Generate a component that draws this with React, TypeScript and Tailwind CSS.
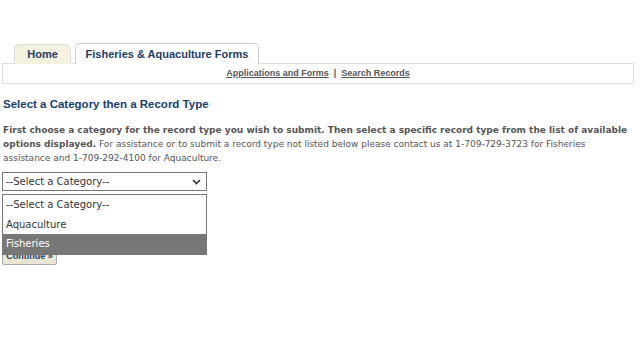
import { useState } from "react";

const options = ["--Select a Category--", "Aquaculture", "Fisheries"];

export default function App() {
    const [selected] = useState("Fisheries");

    return (
        <div className="relative min-h-[337px] w-[640px] bg-white pt-[43px] font-['DejaVu_Sans',Verdana,sans-serif] text-[#555]">
            {/* tabs */}
            <div className="flex items-end gap-[4px] pl-[14px] font-['Liberation_Sans',Arial,sans-serif] text-[11px] font-bold text-[#1d3d66]">
                <div className="-mb-px flex h-[20px] w-[57px] items-center justify-center rounded-t-[5px] border border-b-0 border-[#ddd] bg-[#f4f1de]">Home</div>
                <div className="relative z-10 -mb-px flex h-[21px] w-[184px] items-center justify-center rounded-t-[5px] border border-b-0 border-[#ccc] bg-white">Fisheries &amp; Aquaculture Forms</div>
            </div>
            <div className="mx-[2px] flex h-[21px] w-[632px] items-center justify-center border border-[#ddd] font-['Liberation_Sans',Arial,sans-serif] text-[9px] font-bold text-[#555]">
                <a className="underline">Applications and Forms</a>
                <span className="mx-[5px]">|</span>
                <a className="underline">Search Records</a>
            </div>

            <div className="pl-[3px] pt-[12px]">
                <h2 className="font-['Liberation_Sans',Arial,sans-serif] text-[11.5px] font-bold leading-[16px] text-[#18406e]">Select a Category then a Record Type</h2>
                <p className="mt-[11px] w-[628px] text-[9px] leading-[14px]">
                    <b>First choose a category for the record type you wish to submit. Then select a specific record type from the list of available options displayed.</b> For assistance or to submit a record type not listed below please contact us at 1-709-729-3723 for Fisheries assistance and 1-709-292-4100 for Aquaculture.
                </p>
            </div>

            <div className="ml-[2px] mt-[7px] flex h-[19px] w-[205px] items-center justify-between border border-[#767676] pl-[3px] pr-[5px] text-[10px] text-[#333]">
                <span>--Select a Category--</span>
                <svg width="9" height="6" viewBox="0 0 9 6"><path d="M1 1l3.5 3.5L8 1" fill="none" stroke="#333" strokeWidth="1.6" /></svg>
            </div>

            <button className="ml-[2px] mt-[57px] h-[17px] w-[55px] rounded-[2px] border border-[#aaa] bg-[#e9e6d6] font-['Liberation_Sans',Arial,sans-serif] text-[9px] font-bold leading-none text-[#1d3d66]">Continue »</button>

            {/* open dropdown */}
            <div className="absolute left-[2px] top-[194px] w-[205px] border border-[#767676] bg-white text-[10px] text-[#333]">
                {options.map((opt) => (
                    <div key={opt} className={`flex h-[19.5px] items-center pl-[3px] ${opt === selected ? "bg-[#777] text-white" : ""}`}>{opt}</div>
                ))}
            </div>
        </div>
    );
}
